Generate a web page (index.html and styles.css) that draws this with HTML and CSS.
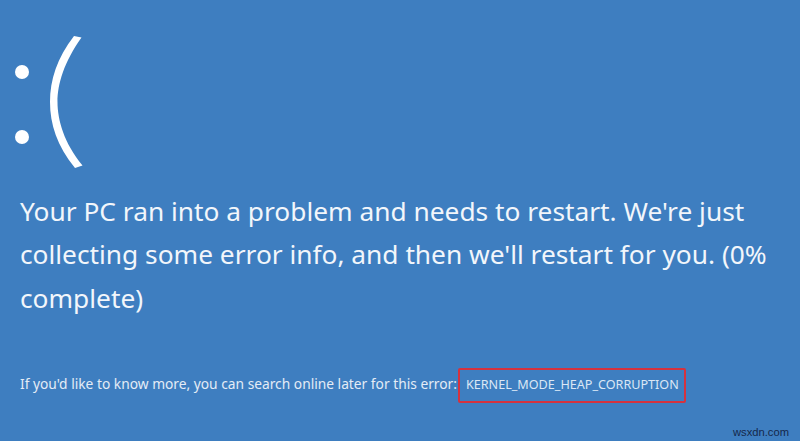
FILE: index.html
```html
<!DOCTYPE html>
<html>
<head>
<meta charset="utf-8">
<link rel="stylesheet" href="styles.css">
</head>
<body>
<div class="screen">
  <div class="face" aria-label=":(">
    <div class="colon"><span class="dot"></span><span class="dot"></span></div>
    <svg class="paren" width="50" height="145" viewBox="40 30 50 145">
      <path d="M74 36 L81.5 37.5 C64 62 57.5 84 57.5 102 C57.5 120 64 143 82.5 165.5 L75 168 C57 146 50 124 50 102 C50 80 57 58 74 36 Z" fill="#fff"/>
    </svg>
  </div>
  <p class="message">Your PC ran into a problem and needs to restart. We're just collecting some error info, and then we'll restart for you. (0% complete)</p>
  <div class="more"><span class="lead">If you'd like to know more, you can search online later for this error:</span><span class="code">KERNEL_MODE_HEAP_CORRUPTION</span></div>
  <div class="mark">wsxdn.com</div>
</div>
</body>
</html>
```
FILE: styles.css
```css
html, body {
  margin: 0;
  padding: 0;
}
body {
  background: #3e7ec0;
  width: 800px;
  height: 441px;
  overflow: hidden;
  font-family: "Noto Sans", "Open Sans", sans-serif;
  color: #f2f6fb;
}
.screen {
  position: relative;
  width: 800px;
  height: 441px;
  padding: 0 0 0 20px;
  box-sizing: border-box;
}
.face {
  display: flex;
  align-items: flex-start;
  height: 175px;
  padding-top: 30px;
  margin-left: -5px;
  box-sizing: border-box;
}
.colon {
  display: flex;
  flex-direction: column;
  gap: 50.5px;
  padding-top: 35px;
}
.dot {
  display: block;
  width: 14px;
  height: 14px;
  border-radius: 50%;
  background: #fff;
}
.paren {
  display: block;
  margin-left: 11px;
}
.message {
  margin: 14.5px 0 0 0;
  width: 775px;
  font-size: 26.3px;
  font-weight: 400;
  line-height: 43.5px;
}
.more {
  display: flex;
  align-items: baseline;
  margin-top: 48px;
  white-space: nowrap;
}
.lead {
  font-size: 13.78px;
  color: #e4ecf6;
}
.code {
  display: inline-block;
  margin-left: 1px;
  padding: 6px 5px 8px 6px;
  font-size: 12.6px;
  color: #dbe7f5;
  border: 2px solid #d5323e;
  border-radius: 2px;
}
.mark {
  position: absolute;
  right: 11px;
  bottom: 3px;
  font-family: "Liberation Sans", Arial, sans-serif;
  font-size: 11.2px;
  color: #15284a;
}
```
